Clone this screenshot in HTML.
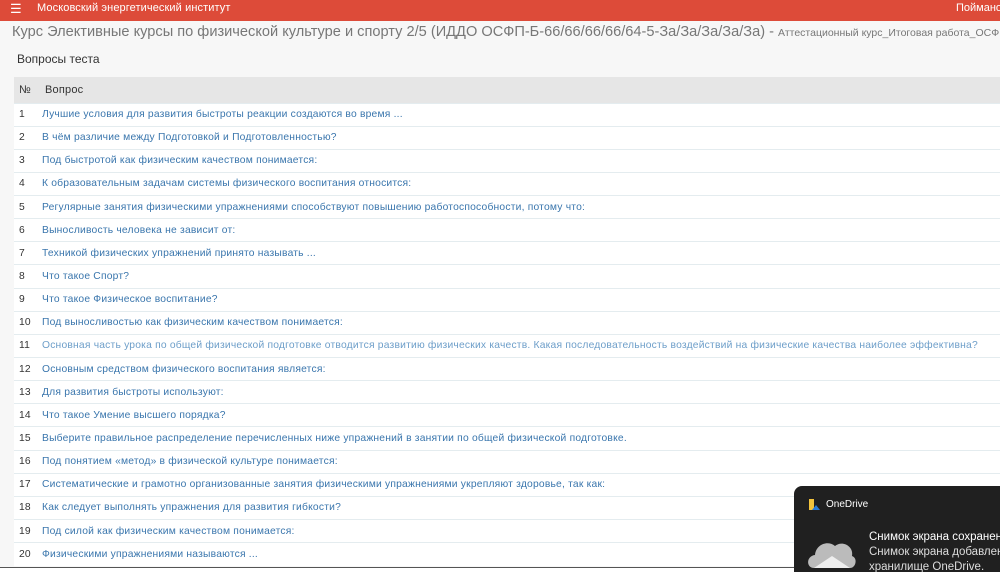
<!DOCTYPE html>
<html><head><meta charset="utf-8"><style>
*{margin:0;padding:0;box-sizing:border-box}
html,body{width:1000px;height:572px;overflow:hidden}
body{background:#f7f7f7;font-family:"Liberation Sans",sans-serif;position:relative}
.top{position:absolute;left:0;top:0;width:1000px;height:21px;background:#dd4b39;color:#fff;font-size:11px}
.top .m{position:absolute;left:10px;top:1px;font-size:13px}
.top .t{position:absolute;left:37px;top:2px;letter-spacing:.1px}
.top .u{position:absolute;left:956px;top:2px}
.title{position:absolute;left:12px;top:24px;white-space:nowrap;color:#777;font-size:14.6px}
.title small{font-size:10.5px}
.h{position:absolute;left:17px;top:52px;font-size:12px;color:#333}
table{position:absolute;left:14px;top:77px;width:990px;border-collapse:collapse;font-size:10.3px;letter-spacing:.2px}
th{background:#e6e6e6;height:26px;text-align:left;font-weight:normal;color:#333;font-size:11px}
th+th{padding-left:3px}
td{height:23.15px;border-top:1.5px solid #e4ecef;background:#fff;color:#333;white-space:nowrap}
td:first-child,th:first-child{width:28px;padding-left:5px}
td a{color:#3a76ad;text-decoration:none}
td a.v{color:#6d9ec9}
.bot{position:absolute;left:0;top:567px;width:1000px;height:5px;background:#fff;border-top:1px solid #555}
.od{position:absolute;left:794px;top:486px;width:206px;height:86px;background:#202020;border-radius:8px 0 0 0;color:#fff;overflow:hidden}
.od .n{position:absolute;left:32px;top:13px;font-size:10px}
.od .l{position:absolute;left:75px;top:44px;font-size:11.5px;line-height:15px;white-space:nowrap;color:#ddd}
</style></head><body>
<div class="top"><span class="m">&#9776;</span><span class="t">Московский энергетический институт</span><span class="u">Пойманов</span></div>
<div class="title">Курс Элективные курсы по физической культуре и спорту 2/5 (ИДДО ОСФП-Б-66/66/66/66/64-5-За/За/За/За/За) - <small>Аттестационный курс_Итоговая работа_ОСФ</small></div>
<div class="h">Вопросы теста</div>
<table>
<tr><th>№</th><th>Вопрос</th></tr>
<tr><td>1</td><td><a>Лучшие условия для развития быстроты реакции создаются во время ...</a></td></tr>
<tr><td>2</td><td><a>В чём различие между Подготовкой и Подготовленностью?</a></td></tr>
<tr><td>3</td><td><a>Под быстротой как физическим качеством понимается:</a></td></tr>
<tr><td>4</td><td><a>К образовательным задачам системы физического воспитания относится:</a></td></tr>
<tr><td>5</td><td><a>Регулярные занятия физическими упражнениями способствуют повышению работоспособности, потому что:</a></td></tr>
<tr><td>6</td><td><a>Выносливость человека не зависит от:</a></td></tr>
<tr><td>7</td><td><a>Техникой физических упражнений принято называть ...</a></td></tr>
<tr><td>8</td><td><a>Что такое Спорт?</a></td></tr>
<tr><td>9</td><td><a>Что такое Физическое воспитание?</a></td></tr>
<tr><td>10</td><td><a>Под выносливостью как физическим качеством понимается:</a></td></tr>
<tr><td>11</td><td><a class="v">Основная часть урока по общей физической подготовке отводится развитию физических качеств. Какая последовательность воздействий на физические качества наиболее эффективна?</a></td></tr>
<tr><td>12</td><td><a>Основным средством физического воспитания является:</a></td></tr>
<tr><td>13</td><td><a>Для развития быстроты используют:</a></td></tr>
<tr><td>14</td><td><a>Что такое Умение высшего порядка?</a></td></tr>
<tr><td>15</td><td><a>Выберите правильное распределение перечисленных ниже упражнений в занятии по общей физической подготовке.</a></td></tr>
<tr><td>16</td><td><a>Под понятием «метод» в физической культуре понимается:</a></td></tr>
<tr><td>17</td><td><a>Систематические и грамотно организованные занятия физическими упражнениями укрепляют здоровье, так как:</a></td></tr>
<tr><td>18</td><td><a>Как следует выполнять упражнения для развития гибкости?</a></td></tr>
<tr><td>19</td><td><a>Под силой как физическим качеством понимается:</a></td></tr>
<tr><td>20</td><td><a>Физическими упражнениями называются ...</a></td></tr>
</table>
<div class="bot"></div>
<div class="od">
<svg style="position:absolute;left:14px;top:13px" width="12" height="12"><rect x="1" y="0" width="5" height="11" fill="#f3c33c"/><path d="M4 11 L8 6 L12 11Z" fill="#2a7ad6"/></svg>
<span class="n">OneDrive</span>
<svg style="position:absolute;left:12px;top:48px" width="52" height="40"><path d="M8 34 C0 34 0 22 9 21 C10 10 22 6 29 12 C36 6 48 12 46 22 C52 24 50 34 44 34Z" fill="#bbb"/><path d="M8 34 L26 22 L44 34Z" fill="#eee"/></svg>
<div class="l"><span style="color:#fff">Снимок экрана сохранен</span><br>Снимок экрана добавлен<br>хранилище OneDrive.</div>
</div>
</body></html>
